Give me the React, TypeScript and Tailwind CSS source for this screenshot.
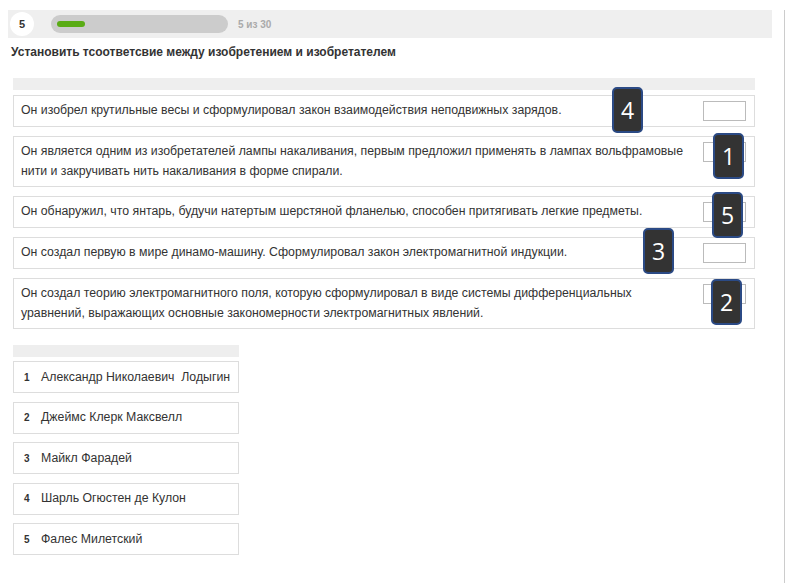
const statements = [
  {
    text: "Он изобрел крутильные весы и сформулировал закон взаимодействия неподвижных зарядов.",
  },
  {
    text: "Он является одним из изобретателей лампы накаливания, первым предложил применять в лампах вольфрамовые нити и закручивать нить накаливания в форме спирали.",
  },
  {
    text: "Он обнаружил, что янтарь, будучи натертым шерстяной фланелью, способен притягивать легкие предметы.",
  },
  {
    text: "Он создал первую в мире динамо-машину. Сформулировал закон электромагнитной индукции.",
  },
  {
    text: "Он создал теорию электромагнитного поля, которую сформулировал в виде системы дифференциальных уравнений, выражающих основные закономерности электромагнитных явлений.",
  },
];

const inventors = [
  "Александр Николаевич  Лодыгин",
  "Джеймс Клерк Максвелл",
  "Майкл Фарадей",
  "Шарль Огюстен де Кулон",
  "Фалес Милетский",
];

// hand-placed answer marks drawn over the rows
const badges = [
  { n: "4", className: "left-[612px] top-[87px]" },
  { n: "1", className: "left-[713px] top-[133px]" },
  { n: "5", className: "left-[712px] top-[192px]" },
  { n: "3", className: "left-[643px] top-[228px]" },
  { n: "2", className: "left-[711px] top-[279px]" },
];

function Badge({ n, className }: { n: string; className: string }) {
  return (
    <div
      className={`absolute flex h-[46px] w-[31px] items-center justify-center rounded-[5px] border-2 border-[#2b4a85] bg-[#333333] text-[23px] leading-none text-white ${className}`}
      style={{ fontFamily: '"Open Sans", "Liberation Sans", sans-serif' }}
    >
      {n}
    </div>
  );
}

export default function App() {
  return (
    <div
      className="relative h-[583px] w-[792px] overflow-hidden bg-white text-[#333333]"
      style={{ fontFamily: '"Liberation Sans", Arial, sans-serif' }}
    >
      <div className="h-full w-[785px] border-r border-[#cccccc]">
        {/* progress header */}
        <div className="ml-2 mt-[10px] flex h-[28px] w-[764px] items-center bg-[#efefef]">
          <div className="ml-[2px] flex h-[24px] w-[24px] items-center justify-center rounded-full bg-white text-[11px] font-bold">
            5
          </div>
          <div className="ml-[17px] flex h-[18px] w-[177px] items-center rounded-full bg-[#cccccc] px-[6px]">
            <div className="h-[6px] w-[28px] rounded-full bg-[#5aac15]" />
          </div>
          <span className="ml-[10px] text-[10px] font-bold text-[#aaaaaa]">5 из 30</span>
        </div>

        <h1 className="ml-[11px] mt-[7px] text-[12px] font-bold leading-[14px]">
          Установить тсоответсвие между изобретением и изобретателем
        </h1>

        {/* statements */}
        <div className="ml-[13px] mt-[19px] w-[742px]">
          <div className="h-[12px] bg-[#eeeeee]" />
          <div className="mt-[5px] flex flex-col gap-[9px]">
            {statements.map((s, i) => (
              <div
                key={i}
                className="flex items-start justify-between border border-[#dddddd] py-[5px] pl-[7px] pr-[8px]"
              >
                <p className="w-[675px] text-[12.3px] leading-[19.5px]">{s.text}</p>
                <div className="h-[20px] w-[43px] border border-[#bbbbbb] bg-white" />
              </div>
            ))}
          </div>
        </div>

        {/* inventors */}
        <div className="ml-[13px] mt-[16px] w-[226px]">
          <div className="h-[12px] bg-[#eeeeee]" />
          <div className="mt-[4px] flex flex-col gap-[8.5px]">
            {inventors.map((name, i) => (
              <div
                key={i}
                className="flex h-[32px] items-center border border-[#dddddd] pl-[10px]"
              >
                <span className="w-[17px] text-[10px] font-bold">{i + 1}</span>
                <span className="whitespace-pre text-[12.3px]">{name}</span>
              </div>
            ))}
          </div>
        </div>
      </div>

      {badges.map((b) => (
        <Badge key={b.n} n={b.n} className={b.className} />
      ))}
    </div>
  );
}
